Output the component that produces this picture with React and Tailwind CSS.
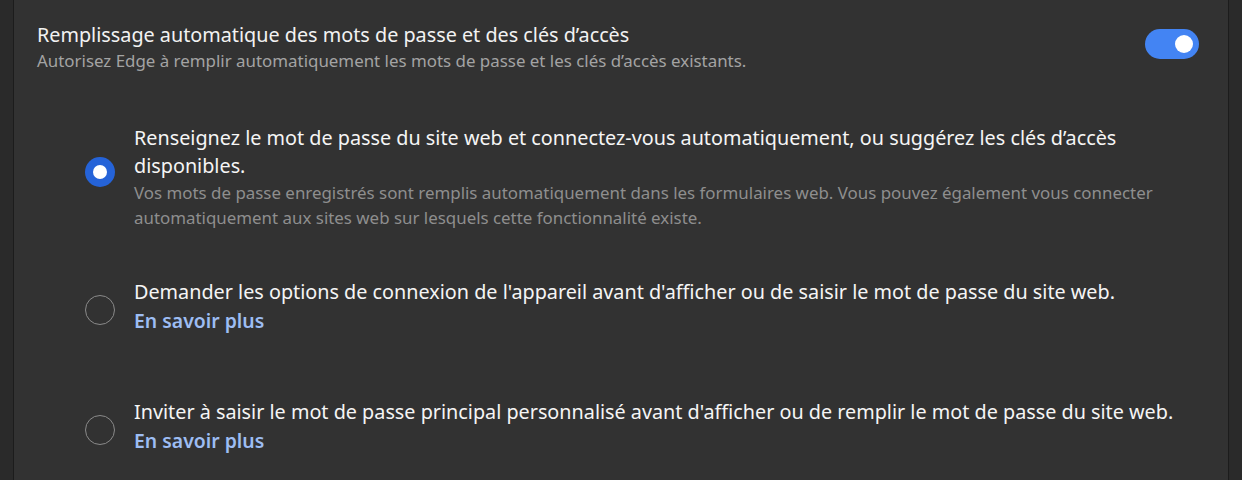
import { useState } from 'react';

const OPTIONS = [
  {
    id: 'auto',
    gap: 'mt-0',
    radio: 'mb-[10px]',
    title:
      "Renseignez le mot de passe du site web et connectez-vous automatiquement, ou suggérez les clés d’accès disponibles.",
    desc:
      'Vos mots de passe enregistrés sont remplis automatiquement dans les formulaires web. Vous pouvez également vous connecter automatiquement aux sites web sur lesquels cette fonctionnalité existe.',
  },
  {
    id: 'device',
    gap: 'mt-[48px]',
    radio: 'mt-[6px]',
    title:
      "Demander les options de connexion de l'appareil avant d'afficher ou de saisir le mot de passe du site web.",
    link: 'En savoir plus',
  },
  {
    id: 'primary',
    gap: 'mt-[62px]',
    radio: 'mt-[6px]',
    title:
      "Inviter à saisir le mot de passe principal personnalisé avant d'afficher ou de remplir le mot de passe du site web.",
    link: 'En savoir plus',
  },
];

function Toggle({ on, onChange }) {
  return (
    <button
      onClick={() => onChange(!on)}
      className={`relative flex h-[30px] w-[54px] shrink-0 items-center rounded-full ${
        on ? 'bg-[#4384f3]' : 'bg-[#555]'
      }`}
    >
      <span
        className={`absolute h-[18px] w-[18px] rounded-full bg-white ${
          on ? 'left-[30px]' : 'left-[6px]'
        }`}
      />
    </button>
  );
}

function Radio({ checked, className }) {
  return checked ? (
    <span className={`flex h-[30px] w-[30px] shrink-0 items-center justify-center rounded-full bg-[#2563d8] ${className}`}>
      <span className="h-[14px] w-[14px] rounded-full bg-white" />
    </span>
  ) : (
    <span className={`h-[30px] w-[30px] shrink-0 rounded-full border border-[#8a8a8a] ${className}`} />
  );
}

export default function App() {
  const [enabled, setEnabled] = useState(true);
  const [choice, setChoice] = useState('auto');

  return (
    <div
      className="flex h-[480px] w-full overflow-hidden bg-[#2a2a2a]"
      style={{ fontFamily: '"Noto Sans", "Open Sans", sans-serif' }}
    >
      <div className="w-[13px] shrink-0" />
      <div className="flex w-[1216px] shrink-0 flex-col border-x border-[#1c1c1c] bg-[#323232] pl-[23px] pr-[29px]">
        <div className="flex items-start justify-between pt-[21px]">
          <div>
            <div className="text-[19.8px] leading-[28px] text-[#f2f2f2]">
              Remplissage automatique des mots de passe et des clés d’accès
            </div>
            <div className="text-[16.9px] leading-[24px] text-[#a3a3a3]">
              Autorisez Edge à remplir automatiquement les mots de passe et les clés d’accès existants.
            </div>
          </div>
          <div className="pt-[8px]">
            <Toggle on={enabled} onChange={setEnabled} />
          </div>
        </div>

        <div className="mt-[51px] flex flex-col pl-[48px]">
          {OPTIONS.map((o) => (
            <label
              key={o.id}
              onClick={() => setChoice(o.id)}
              className={`flex cursor-pointer items-center gap-[19px] ${o.gap}`}
            >
              <Radio checked={choice === o.id} className={o.radio} />
              <div className="flex flex-col">
                <div className="text-[19.8px] leading-[28px] text-[#f5f5f5]">{o.title}</div>
                {o.desc && (
                  <div className="text-[16.9px] leading-[25px] text-[#8e8e8e]">{o.desc}</div>
                )}
                {o.link && (
                  <a className="text-[19.4px] font-semibold leading-[30px] text-[#9dbdf3]">{o.link}</a>
                )}
              </div>
            </label>
          ))}
        </div>
      </div>
    </div>
  );
}
